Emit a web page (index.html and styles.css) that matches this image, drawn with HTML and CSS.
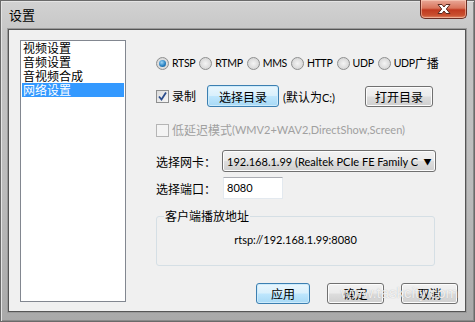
FILE: index.html
```html
<!DOCTYPE html>
<html lang="zh-CN">
<head>
<meta charset="utf-8">
<title>设置</title>
<link rel="stylesheet" href="styles.css">
</head>
<body>
<div class="window">
  <div class="titlebar">
    <span class="title">设置</span>
    <div class="close">
      <svg width="20" height="12" viewBox="0 0 20 12"><path d="M4 1.5 L8 1.5 L10 4 L12 1.5 L16 1.5 L12.3 6 L16 10.5 L12 10.5 L10 8 L8 10.5 L4 10.5 L7.7 6 Z" fill="#ffffff" stroke="#5a2a20" stroke-width="1"/></svg>
    </div>
  </div>
  <div class="client">
    <div class="list">
      <div class="item">视频设置</div>
      <div class="item">音频设置</div>
      <div class="item">音视频合成</div>
      <div class="item selected">网络设置</div>
    </div>
    <div class="panel">
      <div class="row radios">
        <label class="opt"><span class="radio checked"></span><span class="lat">RTSP</span></label>
        <label class="opt"><span class="radio"></span><span class="lat">RTMP</span></label>
        <label class="opt"><span class="radio"></span><span class="lat">MMS</span></label>
        <label class="opt"><span class="radio"></span><span class="lat">HTTP</span></label>
        <label class="opt"><span class="radio"></span><span class="lat">UDP</span></label>
        <label class="opt"><span class="radio"></span><span class="lat">UDP</span>广播</label>
      </div>
      <div class="row rec">
        <label class="opt"><span class="check checked"><svg width="11" height="11" viewBox="0 0 11 11"><path d="M2 5.5 L4.5 8.5 L9 1.5" fill="none" stroke="#2a4c8c" stroke-width="1.8"/></svg></span>录制</label>
        <button class="btn default dir">选择目录</button>
        <span class="hint"><span class="lat">(</span>默认为<span class="lat">C:)</span></span>
        <button class="btn open">打开目录</button>
      </div>
      <div class="row low">
        <label class="opt disabled"><span class="check dis"></span>低延迟模式<span class="lat">(WMV2+WAV2,DirectShow,Screen)</span></label>
      </div>
      <div class="row field nic">
        <span class="lbl">选择网卡：</span>
        <div class="select"><span class="sel-text lat">192.168.1.99 (Realtek PCIe FE Family Controller)</span><span class="arrow">▼</span></div>
      </div>
      <div class="row field port">
        <span class="lbl">选择端口：</span>
        <div class="input lat">8080</div>
      </div>
      <fieldset class="group">
        <legend>客户端播放地址</legend>
        <div class="url lat">rtsp://192.168.1.99:8080</div>
      </fieldset>
      <div class="row actions">
        <button class="btn default w54">应用</button>
        <button class="btn w57">确定</button>
        <button class="btn w57">取消</button>
        <span class="watermark">www.taskcity.com</span>
      </div>
    </div>
  </div>
</div>
</body>
</html>
```

FILE: styles.css
```css
* { box-sizing: border-box; }
html, body { margin: 0; padding: 0; }
body {
  width: 475px;
  height: 322px;
  overflow: hidden;
  font-family: "Noto Sans CJK SC", "Liberation Sans", sans-serif;
  font-size: 12px;
  color: #000;
  background: #fff;
}
.lat {
  font-family: Lato, "Liberation Sans", sans-serif;
  font-size: 11px;
}
.window {
  width: 475px;
  height: 322px;
  display: flex;
  flex-direction: column;
  padding: 0 8px 9px 7px;
  background: linear-gradient(180deg, #d2d2d2 0%, #c6c6c6 10%, #bbbbbb 60%, #a9a9a9 100%);
  border: 1px solid #6a6a6a;
  box-shadow: inset 1px 1px 0 #e4e4e4, inset -1px -1px 0 #8a8a8a;
}
.titlebar {
  height: 28px;
  flex: none;
  display: flex;
  justify-content: space-between;
  align-items: flex-start;
}
.title {
  margin-top: 6px;
  margin-left: 1px;
  font-size: 13px;
  line-height: 16px;
  color: #000;
}
.close {
  width: 47px;
  height: 19px;
  margin-top: -1px;
  margin-right: -1px;
  border: 1px solid #6b2e24;
  border-top: none;
  border-radius: 0 0 5px 5px;
  background: linear-gradient(180deg, #e9a898 0%, #d9755c 45%, #c0391f 55%, #c9502f 85%, #e08a6a 100%);
  box-shadow: inset 0 0 0 1px rgba(255,220,200,0.5);
  display: flex;
  align-items: center;
  justify-content: center;
}
.close svg { display: block; }
.client {
  flex: 1;
  display: flex;
  background: #f0f0f0;
  border: 1px solid #555;
  box-shadow: 0 0 0 1px #9a9a9a;
  padding: 10px 7px 0 11px;
}
.list {
  width: 106px;
  height: 262px;
  flex: none;
  background: #fff;
  border: 1px solid #828790;
  padding: 0 1px;
}
.item {
  height: 14px;
  line-height: 14px;
  padding-left: 1px;
  white-space: nowrap;
}
.item.selected { background: #3399ff; color: #fff; }
.panel {
  flex: 1;
  min-width: 0;
  margin-left: 30px;
  display: flex;
  flex-direction: column;
}
.row { display: flex; align-items: center; }
.opt {
  display: flex;
  align-items: center;
  white-space: nowrap;
  line-height: 14px;
}
.radios { margin-top: 15px; height: 16px; gap: 4px; }
.radios .lat { font-size: 10.5px; letter-spacing: -0.3px; }
.radio {
  width: 13px;
  height: 13px;
  border-radius: 50%;
  border: 1px solid #8e8f8f;
  background: radial-gradient(circle at 50% 50%, #f4f4f4 0%, #dcdcdc 60%, #cfcfcf 100%);
  margin-right: 3px;
  position: relative;
  flex: none;
}
.radio.checked::after {
  content: "";
  position: absolute;
  left: 2px; top: 2px;
  width: 7px; height: 7px;
  border-radius: 50%;
  background: radial-gradient(circle at 40% 35%, #9fd6f6 0%, #2a83c4 55%, #14507e 100%);
}
.check {
  width: 13px;
  height: 13px;
  border: 1px solid #8e8f8f;
  background: linear-gradient(135deg, #dcdcdc 0%, #f6f6f6 100%);
  margin-right: 3px;
  display: flex;
  align-items: center;
  justify-content: center;
  flex: none;
}
.check svg { display: block; }
.check.dis { border-color: #b5b5b5; background: #f4f4f4; }
.disabled { color: #a0a0a0; }
.rec { margin-top: 14px; height: 22px; }
.btn {
  font-family: inherit;
  font-size: 12px;
  height: 21px;
  padding: 0;
  color: #000;
  border: 1px solid #707070;
  border-radius: 3px;
  background: linear-gradient(180deg, #f2f2f2 0%, #ebebeb 48%, #dddddd 52%, #cfcfcf 100%);
  box-shadow: inset 0 0 0 1px #fcfcfc;
  line-height: 19px;
}
.btn.default {
  border-color: #3c7fb1;
  background: linear-gradient(180deg, #eaf6fd 0%, #d9f0fc 48%, #bee6fd 52%, #a7d9f5 100%);
  box-shadow: inset 0 0 0 1px #cdebfb;
}
.dir { width: 72px; height: 22px; margin-left: 11px; }
.hint { margin-left: 4px; white-space: nowrap; }
.open { width: 68px; margin-left: 30px; }
.low { margin-top: 16px; height: 14px; }
.field { height: 22px; }
.nic { margin-top: 13px; }
.port { margin-top: 5px; }
.lbl { width: 66px; flex: none; }
.select {
  width: 214px;
  height: 22px;
  border: 1px solid #707070;
  border-radius: 3px;
  background: linear-gradient(180deg, #f2f2f2 0%, #ebebeb 48%, #dddddd 52%, #cfcfcf 100%);
  box-shadow: inset 0 0 0 1px #fcfcfc;
  display: flex;
  align-items: center;
  padding-left: 4px;
  overflow: hidden;
}
.sel-text { flex: 1; min-width: 0; white-space: nowrap; overflow: hidden; margin-right: 2px; }
.arrow { width: 15px; font-size: 8px; text-align: center; flex: none; }
.input {
  width: 60px;
  height: 22px;
  margin-left: 1px;
  background: #fff;
  border: 1px solid #e3e9ef;
  border-top-color: #abadb3;
  padding-left: 3px;
  line-height: 20px;
}
.group {
  margin: 10px 0 0 0;
  width: 279px;
  height: 57px;
  border: 1px solid #d5dfe5;
  border-radius: 3px;
  padding: 0 4px;
}
.group legend {
  padding: 0 1px;
  margin-left: 3px;
  line-height: 14px;
  font-size: 12px;
}
.url {
  text-align: center;
  line-height: 14px;
  margin-top: 10px;
}
.actions {
  margin-top: 17px;
  justify-content: flex-end;
  gap: 17px;
  position: relative;
}
.w54 { width: 54px; }
.w57 { width: 57px; }
.watermark {
  position: absolute;
  right: 0;
  top: 1px;
  font-family: "Liberation Sans", sans-serif;
  font-size: 15px;
  line-height: 18px;
  color: rgba(255,255,255,0.8);
  text-shadow: 0 0 1px rgba(120,120,120,0.5);
  pointer-events: none;
}
```
